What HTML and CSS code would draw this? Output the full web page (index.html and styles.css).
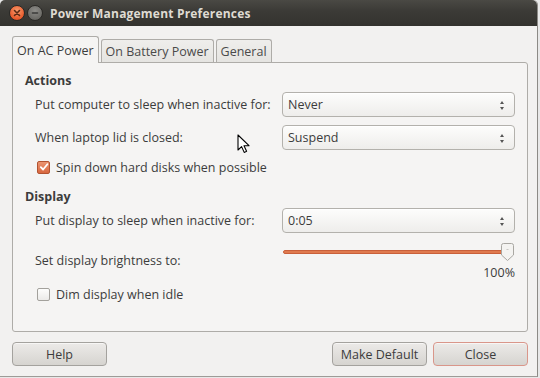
FILE: index.html
```html
<!DOCTYPE html>
<html lang="en">
    <head>
        <meta charset="UTF-8" />
        <title>Power Management Preferences</title>
        <link rel="stylesheet" href="styles.css">
    </head>
    <body>
        <div class="window">
            <div class="titlebar">
                <div class="wm-btn wm-close">
                    <svg width="8" height="8" viewBox="0 0 8 8"><path d="M1.5 1.5l5 5M6.5 1.5l-5 5" stroke="#5a2a14" stroke-width="1.6" stroke-linecap="round"/></svg>
                </div>
                <div class="wm-btn wm-min">
                    <svg width="8" height="8" viewBox="0 0 8 8"><path d="M1.5 4h5" stroke="#3a3a38" stroke-width="1.6" stroke-linecap="round"/></svg>
                </div>
                <span class="title">Power Management Preferences</span>
            </div>

            <div class="content">
                <div class="tabs">
                    <div class="tab active">On AC Power</div>
                    <div class="tab">On Battery Power</div>
                    <div class="tab">General</div>
                </div>

                <div class="notebook">
                    <h2 class="group">Actions</h2>
                    <div class="row">
                        <span class="label">Put computer to sleep when inactive for:</span>
                        <div class="combo">Never<span class="arrows"></span></div>
                    </div>
                    <div class="row">
                        <span class="label">When laptop lid is closed:</span>
                        <div class="combo">Suspend<span class="arrows"></span></div>
                    </div>
                    <label class="check-row">
                        <span class="check checked">
                            <svg width="10" height="10" viewBox="0 0 10 10"><path d="M1.8 5.2l2.3 2.3 4.3-5.2" fill="none" stroke="#fff" stroke-width="1.8" stroke-linecap="round" stroke-linejoin="round"/></svg>
                        </span>
                        Spin down hard disks when possible
                    </label>

                    <h2 class="group display">Display</h2>
                    <div class="row">
                        <span class="label">Put display to sleep when inactive for:</span>
                        <div class="combo">0:05<span class="arrows"></span></div>
                    </div>
                    <div class="row brightness">
                        <span class="label">Set display brightness to:</span>
                        <div class="scale">
                            <div class="trough">
                                <div class="fill"></div>
                                <div class="knob">
                                    <svg width="13" height="18" viewBox="0 0 13 18"><path d="M2.5 0.5h8a2 2 0 0 1 2 2v9.5l-6 5.5-6-5.5v-9.5a2 2 0 0 1 2-2z" fill="#f4f3f1" stroke="#a9a7a2"/><path d="M5.5 6.5h2" stroke="#c9c7c3"/></svg>
                                </div>
                            </div>
                            <div class="value">100%</div>
                        </div>
                    </div>
                    <label class="check-row dim">
                        <span class="check"></span>
                        Dim display when idle
                    </label>
                </div>

                <div class="actions">
                    <button class="btn">Help</button>
                    <div class="spacer"></div>
                    <button class="btn">Make Default</button>
                    <button class="btn default">Close</button>
                </div>
            </div>

            <svg class="cursor" width="14" height="20" viewBox="0 0 14 20"><path d="M1 1v15l3.6-3.4 2.6 5.8 2.4-1.1-2.6-5.6h5z" fill="#fff" stroke="#000" stroke-width="1.1" stroke-linejoin="round"/></svg>
        </div>
    </body>
</html>
```

FILE: styles.css
```css
:root {
    --bg: #f2f1f0;
    --page: #f5f4f3;
    --text: #3c3c3c;
    --border: #aeaca8;
    --accent: #e07a4f;
}

* {
    margin: 0;
    padding: 0;
    box-sizing: border-box;
}

body {
    width: 540px;
    height: 378px;
    background: #e8e8e8;
    font-family: "Open Sans", "DejaVu Sans", sans-serif;
    font-size: 12.5px;
    color: var(--text);
    overflow: hidden;
}

.window {
    position: relative;
    width: 538px;
    height: 377px;
    background: var(--bg);
    border-right: 1px solid #8c8a86;
    border-bottom: 1px solid #9d9b97;
    border-radius: 5px 5px 0 0;
    display: flex;
    flex-direction: column;
}

/* title bar */
.titlebar {
    height: 26px;
    display: flex;
    align-items: center;
    padding-left: 9px;
    background: linear-gradient(#4a4944, #3c3b37 40%, #33322e);
    border-radius: 5px 5px 0 0;
}

.wm-btn {
    width: 16px;
    height: 16px;
    border-radius: 50%;
    display: flex;
    align-items: center;
    justify-content: center;
    margin-right: 2px;
}

.wm-close {
    background: radial-gradient(circle at 50% 35%, #f79b6d, #e8592a 70%, #c2431b);
    border: 1px solid #2a2926;
}

.wm-min {
    background: radial-gradient(circle at 50% 35%, #8d8c88, #6b6a66 70%, #55544f);
    border: 1px solid #2a2926;
}

.title {
    margin-left: 5px;
    color: #dfdbd2;
    font-weight: 700;
    font-size: 12px;
    letter-spacing: 0.2px;
}

.content {
    flex: 1;
    padding: 10px 9px 0 12px;
    display: flex;
    flex-direction: column;
}

/* tabs */
.tabs {
    display: flex;
    align-items: flex-end;
    gap: 2px;
    height: 26px;
    position: relative;
    z-index: 1;
}

.tab {
    height: 23px;
    padding: 0 4px;
    display: flex;
    align-items: center;
    background: linear-gradient(#efeeec, #e5e4e1);
    border: 1px solid var(--border);
    border-bottom: none;
    border-radius: 3px 3px 0 0;
    color: #4a4a4a;
}

.tab.active {
    height: 27px;
    margin-bottom: -1px;
    background: var(--page);
    color: var(--text);
}

.notebook {
    height: 270px;
    background: var(--page);
    border: 1px solid var(--border);
    border-radius: 0 3px 3px 3px;
    padding: 8px 12px 0 12px;
}

.group {
    font-size: 12.5px;
    font-weight: 700;
    line-height: 20px;
    margin-bottom: 1px;
}

.group.display {
    margin-top: 11px;
    margin-bottom: 1px;
}

.row {
    display: grid;
    grid-template-columns: 1fr 233px;
    align-items: center;
    padding-left: 10px;
    margin-bottom: 8px;
}

.combo {
    position: relative;
    height: 25px;
    display: flex;
    align-items: center;
    padding-left: 5px;
    border: 1px solid #b3b1ac;
    border-radius: 4px;
    background: linear-gradient(#fdfdfc, #eeedeb);
    box-shadow: inset 0 1px 0 #fff;
}

.arrows {
    position: absolute;
    right: 9px;
    top: 8px;
    width: 5px;
    height: 9px;
}

.arrows::before,
.arrows::after {
    content: "";
    position: absolute;
    left: 0;
    border-left: 2.5px solid transparent;
    border-right: 2.5px solid transparent;
}

.arrows::before {
    top: 0;
    border-bottom: 3px solid #555;
}

.arrows::after {
    bottom: 0;
    border-top: 3px solid #555;
}

.check-row {
    display: flex;
    align-items: center;
    gap: 6px;
    padding-left: 12px;
    height: 18px;
}

.check {
    width: 13px;
    height: 13px;
    border: 1px solid #a3a19c;
    border-radius: 2px;
    background: linear-gradient(#fdfdfc, #ebeae8);
    display: flex;
    align-items: center;
    justify-content: center;
}

.check.checked {
    background: linear-gradient(#ea9572, #d9673f);
    border-color: #b25331;
}

/* brightness scale */
.row.brightness {
    align-items: start;
    margin-top: 0;
    margin-bottom: 0;
}

.row.brightness .label {
    margin-top: 11px;
}

.scale {
    padding-top: 2px;
}

.trough {
    position: relative;
    height: 18px;
    display: flex;
    align-items: center;
    padding-left: 1px;
}

.fill {
    width: 225px;
    height: 4px;
    background: var(--accent);
    border: 1px solid #c9603a;
    border-radius: 2px;
}

.knob {
    position: absolute;
    left: 219px;
    top: 0;
    line-height: 0;
}

.value {
    text-align: right;
    line-height: 16px;
    margin-top: 4px;
}

.check-row.dim {
    margin-top: 4px;
}

/* dialog buttons */
.actions {
    display: flex;
    gap: 6px;
    margin-top: 10px;
    height: 24px;
}

.spacer {
    flex: 1;
}

.btn {
    width: 95px;
    height: 24px;
    font: inherit;
    color: var(--text);
    border: 1px solid #a4a29e;
    border-radius: 4px;
    background: linear-gradient(#eceae8, #d6d4d0);
    box-shadow: inset 0 1px 0 #f7f6f5;
}

.btn.default {
    border-color: #d9968a;
}

.cursor {
    position: absolute;
    left: 237px;
    top: 134px;
}
```
